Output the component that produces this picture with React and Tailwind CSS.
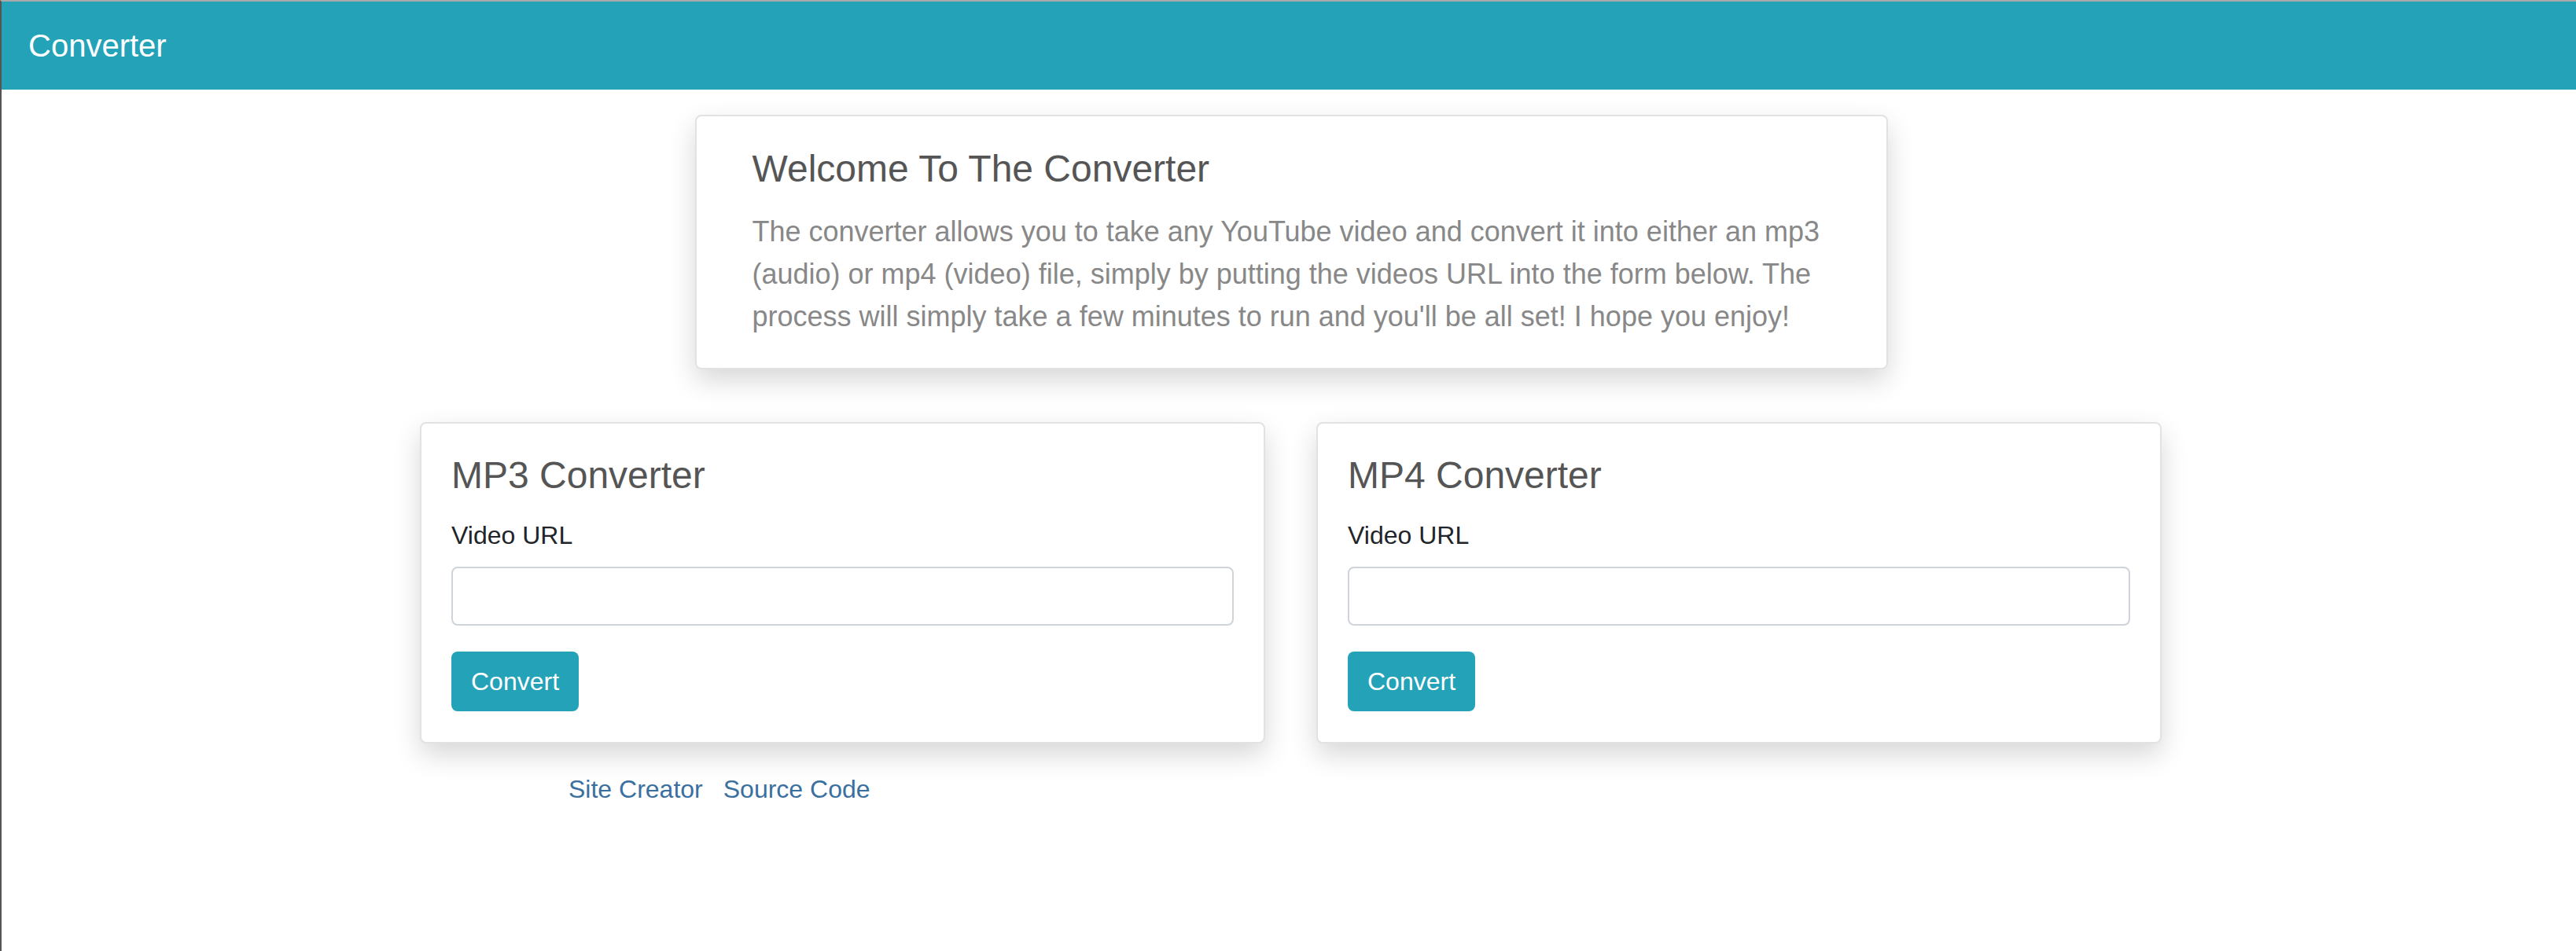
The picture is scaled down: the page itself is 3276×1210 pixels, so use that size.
import React from 'react';

const ConverterCard = ({ title }) => {
  return (
    <div className="w-[1075px] bg-white border-2 border-[#e2e2e2] rounded-[8px] px-[38px] pt-[37px] pb-[39px] shadow-[0_14px_34px_rgba(0,0,0,0.16)]">
      <h4 className="text-[48px] leading-[1.2] text-[#555555] mb-[24px]">{title}</h4>
      <label className="block text-[32px] leading-[48px] text-[#212529] mb-[16px]">Video URL</label>
      <input
        type="text"
        className="block w-full h-[75px] border-2 border-[#ced4da] rounded-[8px] px-[24px] text-[32px] outline-none mb-[33px]"
      />
      <button className="h-[76px] px-[25px] bg-[#24a2b8] text-white text-[32px] rounded-[8px]">
        Convert
      </button>
    </div>
  );
};

const App = () => {
  return (
    <div className="min-h-screen w-full bg-white border-l-2 border-[#555555] border-t-2 border-t-[#a9a9a9] font-['Liberation_Sans',Arial,sans-serif]">
      {/* Navbar */}
      <div className="h-[112px] bg-[#24a2b8] flex items-center pl-[34px]">
        <span className="text-white text-[40px]">Converter</span>
      </div>

      <div className="pl-[6px] pb-[80px]">
        {/* Welcome */}
        <div className="w-[1517px] mx-auto mt-[32px] bg-white border-2 border-[#e2e2e2] rounded-[8px] pl-[71px] pr-[60px] pt-[38px] pb-[38px] shadow-[0_14px_34px_rgba(0,0,0,0.16)]">
          <h4 className="text-[48px] leading-[1.2] text-[#555555] mb-[24px]">Welcome To The Converter</h4>
          <p className="text-[36px] leading-[54px] text-[#888888]">
            The converter allows you to take any YouTube video and convert it into either an mp3 (audio) or mp4 (video) file, simply by putting the videos URL into the form below. The process will simply take a few minutes to run and you'll be all set! I hope you enjoy!
          </p>
        </div>

        {/* Converters */}
        <div className="w-[2216px] mx-auto mt-[67px]">
          <div className="flex gap-[65px]">
            <ConverterCard title="MP3 Converter" />
            <ConverterCard title="MP4 Converter" />
          </div>
          <div className="flex gap-[26px] pl-[189px] mt-[34px] text-[32px] leading-[48px] text-[#3a6f9f]">
            <a href="#">Site Creator</a>
            <a href="#">Source Code</a>
          </div>
        </div>
      </div>
    </div>
  );
};

export default App;
